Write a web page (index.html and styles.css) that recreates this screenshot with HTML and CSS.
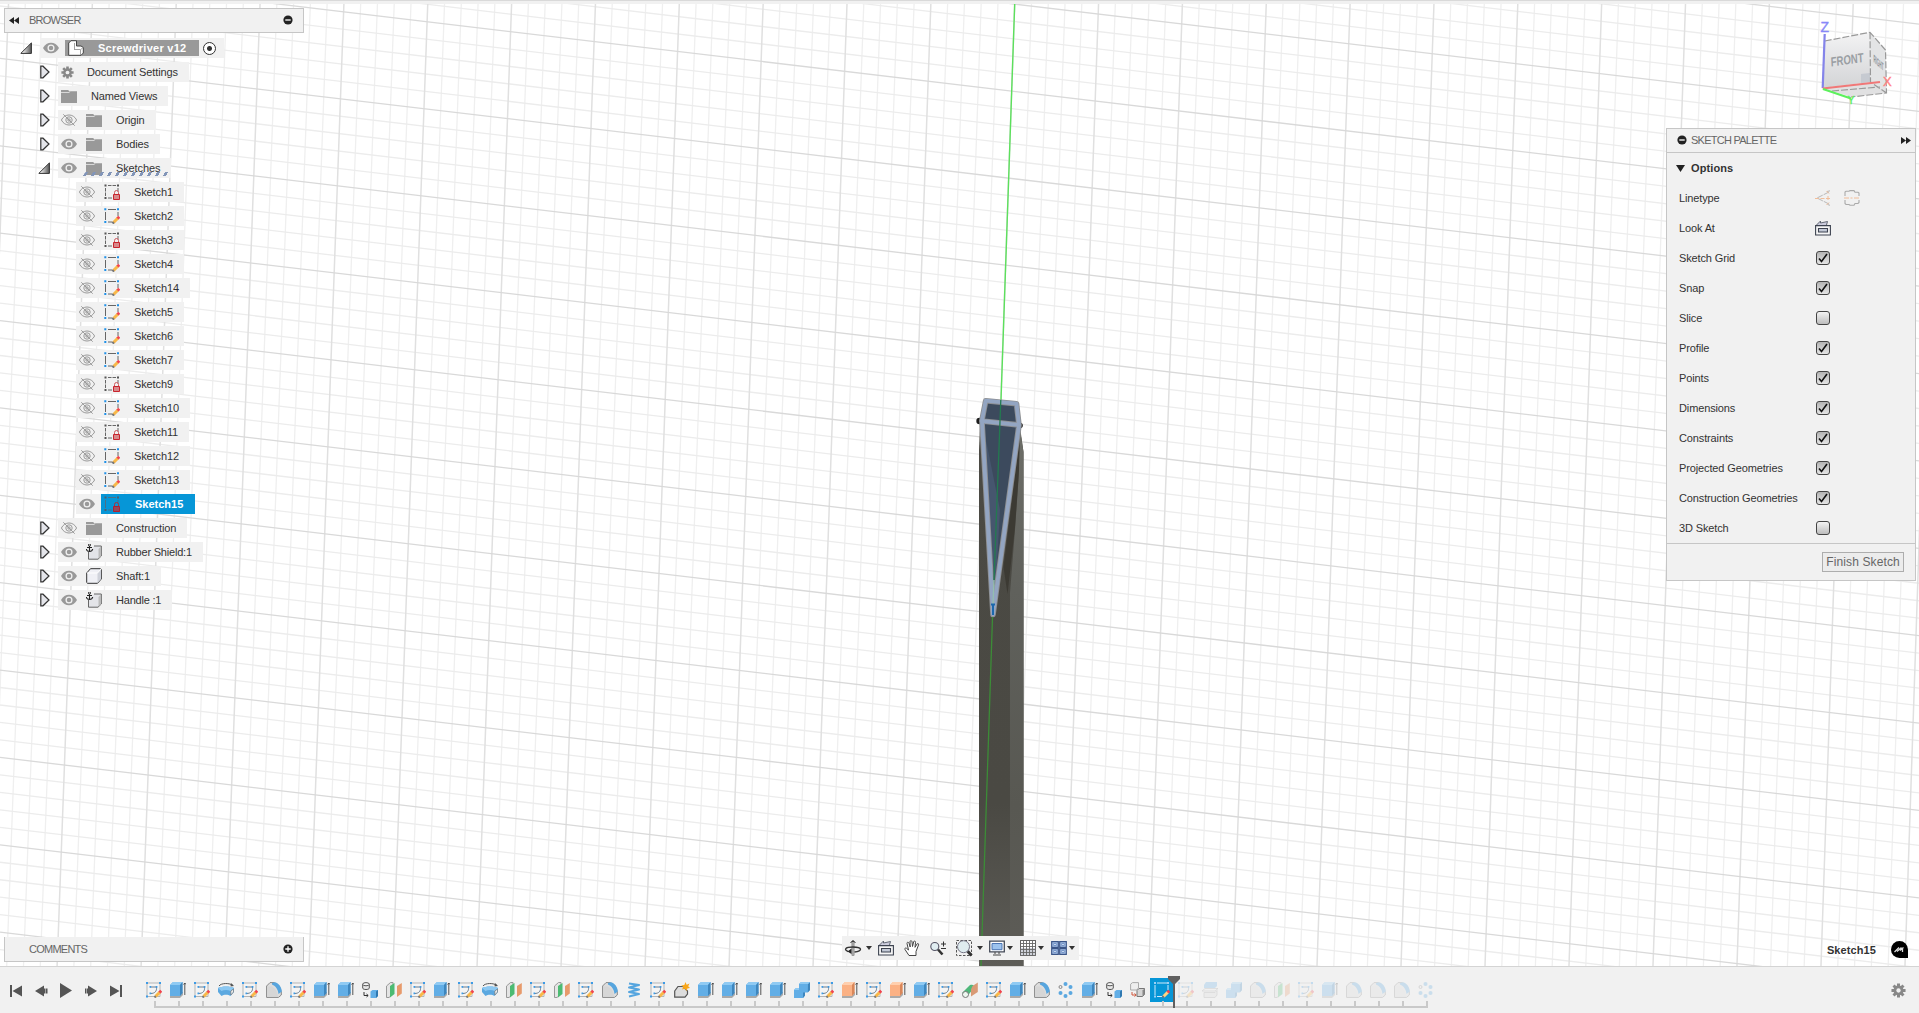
FILE: index.html
```html
<!DOCTYPE html>
<html lang="en">
<head>
<meta charset="utf-8">
<title>Screwdriver v12</title>
<link rel="stylesheet" href="styles.css">
</head>
<body>
<svg class="defs" width="0" height="0">
  <defs>
    <linearGradient id="g-metal" x1="0" y1="0" x2="0" y2="1"><stop offset="0" stop-color="#4b4a44"/><stop offset=".7" stop-color="#4a4943"/><stop offset="1" stop-color="#5d5c57"/></linearGradient>
    <linearGradient id="g-side" x1="0" y1="0" x2="0" y2="1"><stop offset="0" stop-color="#6d6e68"/><stop offset=".3" stop-color="#60615c"/><stop offset=".7" stop-color="#585852"/><stop offset="1" stop-color="#5d5c57"/></linearGradient>
    <linearGradient id="g-cube" x1="0" y1="0" x2="0" y2="1"><stop offset="0" stop-color="#f3f3f4"/><stop offset="1" stop-color="#d3d4d6"/></linearGradient>
    <linearGradient id="g-open" x1="0" y1="0" x2="1" y2="0"><stop offset=".2" stop-color="#eee"/><stop offset="1" stop-color="#555"/></linearGradient>
  </defs>
  <symbol id="open" viewBox="0 0 12 12"><path d="M.8 11.4L11.4.9V11.4Z" fill="url(#g-open)" stroke="#333"/></symbol>
  <symbol id="closed" viewBox="0 0 12 14"><path d="M1.8 1.2H4L10 7 4 12.8H1.8Z" fill="#e4e5ea" stroke="#333" stroke-width="1.2"/></symbol>
  <symbol id="eye" viewBox="0 0 16 16"><path d="M0 8C3.500 1 12.500 1 16 8C12.500 15 3.500 15 0 8Z" fill="#999"/><circle cx="8" cy="8" r="2.900" fill="#999" stroke="#f1f1f1" stroke-width="1.300"/></symbol>
  <symbol id="hid" viewBox="0 0 16 16"><g fill="none" stroke="#9a9a9a"><path d="M.4 8C3.700 1.300 12.300 1.300 15.600 8C12.300 14.700 3.700 14.700 .4 8Z"/><circle cx="8" cy="8" r="3.200"/><circle cx="8" cy="8" r="1.200"/><path d="M2.300 2.300L13.700 13.700"/></g></symbol>
  <symbol id="folder" viewBox="0 0 16 16"><path d="M0 2H7L8.500 3.200H16V15H0Z" fill="#999"/><path d="M0 4.500H8L9.300 3.300" fill="none" stroke="#d8d8d8"/></symbol>
  <symbol id="gear" viewBox="0 0 16 16"><g stroke="currentColor" stroke-width="3.200"><path d="M8 .5V15.500M.5 8H15.500M2.700 2.700L13.300 13.300M13.300 2.700L2.700 13.300"/></g><circle cx="8" cy="8" r="5.300" fill="currentColor"/><circle cx="8" cy="8" r="2.300" fill="#f1f1f1"/></symbol>
  <symbol id="locked" viewBox="0 0 16 16"><path d="M4 1.500H7.500M8.500 1.500H12M1.500 4V7.500M1.500 8.500V12M14 4V7.500M4 14H8" fill="none" stroke="#666"/><path d="M.5 .5h2v2h-2zM13 .5h2v2h-2zM.5 13h2v2h-2z" fill="#555"/><path d="M10.500 10V8.500a2 2 0 0 1 4 0V10" fill="none" stroke="#d05a5f"/><path d="M9.500 10.500h6v5h-6z" fill="#d8888a" stroke="#c8232c"/></symbol>
  <symbol id="locked-on" viewBox="0 0 16 16"><path d="M4 1.500H12M1.500 4V12M14 4V7.500M4 14H8" fill="none" stroke="#4d6f85"/><path d="M.5 .5h2v2h-2zM13 .5h2v2h-2zM.5 13h2v2h-2z" fill="#4d5f70"/><path d="M10.500 10V8.500a2 2 0 0 1 4 0V10" fill="none" stroke="#a8323f"/><path d="M9.500 10.500h6v5h-6z" fill="#94485c" stroke="#b02233"/></symbol>
  <symbol id="edit" viewBox="0 0 16 16"><path d="M4 1.500H12M1.500 4V12M14 4V8M4 14H8" fill="none" stroke="#666"/><path d="M.3 .3h2v2h-2zM13 .3h2v2h-2zM.3 13h2v2h-2z" fill="#1e90e8"/><path d="M9.500 14.500L14 10" stroke="#f9b84a" stroke-width="3"/><path d="M13.500 10.500L15.300 8.700" stroke="#f04550" stroke-width="3"/><path d="M8.500 15.500L9.800 14.200" stroke="#777" stroke-width="2.500"/></symbol>
  <symbol id="assembly" viewBox="0 0 16 16"><path d="M.7 3L3 .7H8.500V6H13L15.300 7.500V13L13 15.300H.7Z" fill="#fff" stroke="#444"/><path d="M6.500 3V9.500M6 9.500H12.500L14.800 8M12.500 10V15" fill="none" stroke="#999" stroke-width=".9"/></symbol>
  <symbol id="anchor" viewBox="0 0 16 16"><path d="M2.500 8V15.200H12L15.300 12V2H8" fill="#e3e4e8" stroke="#666"/><path d="M12.500 5L15 2.500V12L12.500 14.500Z" fill="#bbb"/><path d="M3.500 2V7M1 3.500H6M.3 5C1 8.300 6 8.300 6.700 5" fill="none" stroke="#222" stroke-width="1.100"/><circle cx="3.500" cy="1" r="1.100" fill="#f1f1f1" stroke="#222" stroke-width=".9"/></symbol>
  <symbol id="body" viewBox="0 0 16 16"><path d="M.7 5L4.500 .7H14.500L15.300 1.500V11L11.500 15.300H1.500L.7 14.500Z" fill="#eff0f5" stroke="#333"/><path d="M11.500 5V15L15 11V1.500Z" fill="#cfd2da"/><path d="M1 5H11.500L15 1" fill="none" stroke="#fff"/></symbol>
  <symbol id="lookat" viewBox="0 0 16 16"><path d="M.6 5.600H15.400V15H.6Z" fill="#f7f7f7" stroke="#3d4350" stroke-width="1.100"/><path d="M3.500 8.500h9v3.500h-9z" fill="#c3c9d6" stroke="#3d4350" stroke-width="1.100"/><path d="M1.500 5L5.500 1V3L12.500 1.500 11.500 5" fill="#ccd" stroke="#555b68" stroke-width=".9"/></symbol>
  <symbol id="minus" viewBox="0 0 10 10"><circle cx="5" cy="5" r="4.600" fill="#222"/><path d="M2.300 5H7.700" stroke="#fff" stroke-width="1.300"/></symbol>
  <symbol id="plus" viewBox="0 0 10 10"><circle cx="5" cy="5" r="4.600" fill="#222"/><path d="M2.300 5H7.700M5 2.300V7.700" stroke="#fff" stroke-width="1.300"/></symbol>
  <symbol id="tri" viewBox="0 0 6 4"><path d="M0 0H6L3 4Z" fill="#333"/></symbol>
  <symbol id="check" viewBox="0 0 14 14"><path d="M3 7.500L5.500 10.500 11 3" fill="none" stroke="#111" stroke-width="1.600"/></symbol>

  <symbol id="t-sketch" viewBox="0 0 16 16"><path d="M1 1H14V14.500H1Z" fill="#f4f4f4" stroke="#b5b5b5"/><path d="M4 5H10.500C11 9 9 11.500 4.500 11.500" fill="none" stroke="#6a7d8e"/><path d="M0 0h2v2H0zM13 0h2v2h-2zM0 13.500h2v2H0zM3.500 4h1.700v1.700H3.500zM9.700 4h1.700v1.700H9.700zM3.500 10.500h1.700v1.700H3.500z" fill="#3d9be6"/><path d="M9.500 14.500L14 10" stroke="#f9b84a" stroke-width="3"/><path d="M13.500 10.500L15.300 8.700" stroke="#f04550" stroke-width="3"/><path d="M8.500 15.500L9.800 14.200" stroke="#777" stroke-width="2"/></symbol>
  <symbol id="t-current" viewBox="0 0 16 16"><path d="M3 1H13M1 3V13M14 3V8M3 14.500H8" fill="none" stroke="#cfe9fa"/><path d="M0 0h2v2H0zM13 0h2v2h-2zM0 13.500h2v2H0z" fill="#9bd0f5"/><path d="M9.500 14.500L14 10" stroke="#ffd383" stroke-width="3"/><path d="M13.500 10.500L15.300 8.700" stroke="#f04550" stroke-width="3"/><path d="M8.500 15.500L9.800 14.200" stroke="#777" stroke-width="2"/></symbol>
  <symbol id="t-extrude" viewBox="0 0 16 16"><path d="M0 12.500V16H10L13 13V10Z" fill="#aaa"/><path d="M0 3L3 0H12.500V11L10 14H0Z" fill="#62aee6"/><path d="M0 3L3 0H12.500L10 3Z" fill="#8fcaf3"/><path d="M10 3L12.500 0V11L10 14Z" fill="#3e86bd"/><path d="M14.800 13V1M13.500 2.500L14.800 1 16 2.500" fill="none" stroke="#444" stroke-width=".9"/></symbol>
  <symbol id="t-orange" viewBox="0 0 16 16"><path d="M0 12.500V16H10L13 13V10Z" fill="#aaa"/><path d="M0 3L3 0H12.500V11L10 14H0Z" fill="#fbb184"/><path d="M0 3L3 0H12.500L10 3Z" fill="#ffcfae"/><path d="M10 3L12.500 0V11L10 14Z" fill="#d9875a"/><path d="M14.800 13V1M13.500 2.500L14.800 1 16 2.500" fill="none" stroke="#444" stroke-width=".9"/></symbol>
  <symbol id="t-revolve" viewBox="0 0 16 16"><path d="M1 4C3 .8 12 .8 15 3.500" fill="none" stroke="#555"/><path d="M13 1L16 4 12.500 4.500" fill="#555"/><path d="M0 6C4 4 12 4 16 6V10L12.500 14C10 12.300 6 12.300 3.500 14L0 10Z" fill="#5ba8e0"/><path d="M0 6C4 4 12 4 16 6L12.500 9C10 7.700 6 7.700 3.500 9Z" fill="#8cc8f2"/><path d="M12.800 9L15.500 7V10L12.800 13Z" fill="#eee" stroke="#777" stroke-width=".7"/></symbol>
  <symbol id="t-fillet" viewBox="0 0 16 16"><path d="M.6 4L4 .6H8C12 2 14.500 5 15.300 10V13L12.500 15.400H.6Z" fill="#ddd" stroke="#888"/><path d="M6 1L9 .3C13 1.500 15.500 5 15.800 9.500L12.500 12C12 7.500 10 4 6 2.500Z" fill="#57a5de"/><path d="M1 4.500H5.500C9 6 11.500 9 12 14.800H1Z" fill="#d6d6d6"/></symbol>
  <symbol id="t-copy" viewBox="0 0 16 16"><path d="M.7 2.200V6C.7 8 7.300 8 7.300 6V2.200" fill="#e7e7e7" stroke="#555"/><ellipse cx="4" cy="2.200" rx="3.300" ry="1.600" fill="#f6f6f6" stroke="#555"/><path d="M2 10V13.500H6M4.500 12L6.200 13.500 4.500 15" fill="none" stroke="#333"/><path d="M8.500 9.500L10.500 8H16V14L14 16H8.500Z" fill="#62aee6"/><path d="M14 9.500L16 8V14L14 16Z" fill="#2f78b0"/></symbol>
  <symbol id="t-derive" viewBox="0 0 16 16"><path d="M.6 2.200L2.500 .6H8.500V6L6.500 8H.6Z" fill="#eee" stroke="#aaa"/><path d="M2 10V13H6M4.500 11.500L6.200 13 4.500 14.500" fill="none" stroke="#d0573c"/><path d="M7 8.500L9 6.500H14.500V12.500L12.500 14.500H7Z" fill="#d5d5d5" stroke="#777"/><path d="M12.500 8.500L14.500 6.500V12.500L12.500 14.500Z" fill="#888"/></symbol>
  <symbol id="t-plane" viewBox="0 0 16 16"><path d="M.5 4L4.500 .5H7V12L3 15.500H.5Z" fill="#e4e4e4" stroke="#999"/><path d="M4 4L8.500 1V12L4 15.500Z" fill="#4cbb72"/><path d="M11 4L15.800 1V11.500L11 15Z" fill="#e79a6b"/></symbol>
  <symbol id="t-coil" viewBox="0 0 16 16"><path d="M3 1.500L13 3 3 5.500 13 7.500 3 10 13 12 3 14.500" fill="none" stroke="#55a5df" stroke-width="2" stroke-linejoin="round"/></symbol>
  <symbol id="t-form" viewBox="0 0 16 16"><path d="M.7 9L4 4.500H9L13.500 9V12L11 15.200H.7Z" fill="#ddd" stroke="#555" stroke-width="1.200"/><path d="M11.500 0L12.600 2.800 15.500 1.500 14.200 4.300 16 6 13.300 6.500 12.500 9 10.800 6.700 8 7.500 9.300 5 7.300 3.500 10.300 3Z" fill="#f9a61a"/></symbol>
  <symbol id="t-combine" viewBox="0 0 16 16"><path d="M5 2L7 0H16V8L13.500 10.500H11V13.500L9 16H0V8L2 6H5Z" fill="#62aee6"/><path d="M14 2L16 0V8L13.800 10.500ZM9 10.500H11V13.500L9 16Z" fill="#3e86bd"/><path d="M5 2L7 0H16L14 2ZM0 8L2 6H5V8Z" fill="#8fcaf3"/></symbol>
  <symbol id="t-sweep" viewBox="0 0 16 16"><path d="M0 11L8 3C11 2 13 3.500 12 6L5 14.500Z" fill="#4fb87a"/><circle cx="3.500" cy="12.500" r="3" fill="#edf7f0" stroke="#777"/><path d="M10.500 4L15.800 .5V10L9 14.500V7.500Z" fill="#d99a75"/></symbol>
  <symbol id="t-pattern" viewBox="0 0 16 16"><g fill="#5ba8e0"><circle cx="7.500" cy="2" r="2"/><circle cx="12.500" cy="5" r="2"/><circle cx="12.500" cy="11" r="2"/><circle cx="7.500" cy="14" r="2"/><circle cx="2.500" cy="11" r="2"/></g><circle cx="2.500" cy="5" r="1.500" fill="#eee" stroke="#888"/></symbol>
  <symbol id="t-split" viewBox="0 0 16 16"><path d="M2 3L4 0H15V4L13 6H2Z" fill="#62aee6"/><path d="M0 9L3 6.500H16L13 9Z" fill="#eee" stroke="#888" stroke-width=".7"/><path d="M2 10.500H13L15 8.500V13L13 15.500H2Z" fill="#ddd" stroke="#888" stroke-width=".7"/></symbol>
</svg>

<div class="app">
  <div class="topstrip"></div>
  <main class="viewport">
    <svg class="scene" viewBox="0 4 1919 962">
      <g id="grid"></g>
      <path class="axis" d="M1014.700 4L1001 400"/>
      <path d="M980 424L979 450V966H1023.500V452L1020 427Z" fill="url(#g-metal)"/>
      <path d="M1020 430L1023.500 452V966H1010V593L1015 530 1018.500 480Z" fill="url(#g-side)"/>
      <path d="M1019.500 440L1007 540 1003.500 567 1007.500 594 1015 527 1019 470Z" fill="#3c3a33"/>
      <circle cx="979.500" cy="421" r="3.200" fill="#1d1d1d"/><circle cx="1020" cy="425.500" r="2.800" fill="#1d1d1d"/>
      <path d="M985.700 400.500L1016.500 403.500 1019.300 425 993 614 982 421.500Z" fill="#3c4a5d"/>
      <path d="M984 430L1000 510 995 600Z" fill="#46566e"/>
      <path class="rim" d="M985.700 400.700L1016.500 403.700 1019 425 981.800 421ZM982 422L993 614.500 1019 425"/>
      <path class="outline" d="M985.700 400.700L1016.500 403.700 1019 425 981.800 421ZM982 422L993 614.500 1019 425"/>
      <path d="M1000.800 400L994 580" stroke="#237a50" stroke-width="1.300"/>
      <path d="M994 580L993 605" stroke="#93bfb0" stroke-width="1.300"/>
      <path d="M992.500 617L981 966" stroke="#3c8c37" stroke-width="1.300"/>
      <path d="M991 604.500H995M993 604V615" stroke="#1c68ad" stroke-width="2"/>

      <g class="viewcube">
        <path d="M1824.700 41L1870 32.300 1870.500 82 1822.700 88Z" fill="url(#g-cube)"/>
        <path d="M1870 32.300L1885.500 50 1886.500 93 1870.500 82Z" fill="#e3e4e5"/>
        <path d="M1822.700 88L1870.500 82 1886.500 93 1851 97Z" fill="#e1e1e2"/>
        <path d="M1861 74L1870 73V82L1861 83Z" fill="#c6cad1"/>
        <path class="edge" d="M1824.700 41L1870 32.300 1885.500 50 1886.500 93 1851 97M1870 32.300L1870.500 82 1886.500 93M1832 91L1880 87"/>
        <text transform="translate(1831 66.500) rotate(-8) skewX(-5)" textLength="33" lengthAdjust="spacingAndGlyphs" font-size="13" font-weight="bold" fill="#9a9ea3">FRONT</text>
        <text transform="translate(1873.500 62) skewY(42)" textLength="10" lengthAdjust="spacingAndGlyphs" font-size="11" font-weight="bold" fill="#8d9196">RIGHT</text>
        <path d="M1824.700 34L1822.700 88" stroke="#8484ea" stroke-width="2.200"/>
        <path d="M1822.700 88.500L1880 82" stroke="#f07878" stroke-width="2.200"/>
        <path d="M1823 89L1851 98.500" stroke="#5cf05c" stroke-width="2.200"/>
        <text x="1820.500" y="32" font-size="14" stroke-width=".4" stroke="#8888f8" fill="#8888f8">Z</text>
        <text x="1883" y="86" font-size="13" stroke-width=".4" stroke="#ff8383" fill="#ff8383">X</text>
        <text x="1847.700" y="104" font-size="10" stroke-width=".4" stroke="#5cf05c" fill="#5cf05c">Y</text>
      </g>
    </svg>

    <aside class="left">
      <header class="panelbar browser">
        <svg class="rew" viewBox="0 0 10 7"><path d="M5 0V7L0 3.500ZM10 0V7L5 3.500Z" fill="#222"/></svg>
        <span class="caption">BROWSER</span>
        <svg class="dot"><use href="#minus"/></svg>
      </header>
      <ul class="tree">
        <li class="l0"><svg class="arw open"><use href="#open"/></svg><div class="row"><svg><use href="#eye"/></svg><b class="root"><svg><use href="#assembly"/></svg>Screwdriver v12</b><i class="radio"></i></div></li>
        <li class="l1"><svg class="arw"><use href="#closed"/></svg><div class="row doc"><svg class="gear"><use href="#gear"/></svg><span>Document Settings</span></div></li>
        <li class="l1"><svg class="arw"><use href="#closed"/></svg><div class="row views"><svg><use href="#folder"/></svg><span>Named Views</span></div></li>
        <li class="l1"><svg class="arw"><use href="#closed"/></svg><div class="row"><svg><use href="#hid"/></svg><svg><use href="#folder"/></svg><span>Origin</span></div></li>
        <li class="l1"><svg class="arw"><use href="#closed"/></svg><div class="row"><svg><use href="#eye"/></svg><svg><use href="#folder"/></svg><span>Bodies</span></div></li>
        <li class="l1"><svg class="arw open"><use href="#open"/></svg><div class="row hatch"><svg><use href="#eye"/></svg><svg><use href="#folder"/></svg><span>Sketches</span></div></li>
        <li class="l2"><div class="row"><svg><use href="#hid"/></svg><svg><use href="#locked"/></svg><span>Sketch1</span></div></li>
        <li class="l2"><div class="row"><svg><use href="#hid"/></svg><svg><use href="#edit"/></svg><span>Sketch2</span></div></li>
        <li class="l2"><div class="row"><svg><use href="#hid"/></svg><svg><use href="#locked"/></svg><span>Sketch3</span></div></li>
        <li class="l2"><div class="row"><svg><use href="#hid"/></svg><svg><use href="#edit"/></svg><span>Sketch4</span></div></li>
        <li class="l2"><div class="row"><svg><use href="#hid"/></svg><svg><use href="#edit"/></svg><span>Sketch14</span></div></li>
        <li class="l2"><div class="row"><svg><use href="#hid"/></svg><svg><use href="#edit"/></svg><span>Sketch5</span></div></li>
        <li class="l2"><div class="row"><svg><use href="#hid"/></svg><svg><use href="#edit"/></svg><span>Sketch6</span></div></li>
        <li class="l2"><div class="row"><svg><use href="#hid"/></svg><svg><use href="#edit"/></svg><span>Sketch7</span></div></li>
        <li class="l2"><div class="row"><svg><use href="#hid"/></svg><svg><use href="#locked"/></svg><span>Sketch9</span></div></li>
        <li class="l2"><div class="row"><svg><use href="#hid"/></svg><svg><use href="#edit"/></svg><span>Sketch10</span></div></li>
        <li class="l2"><div class="row"><svg><use href="#hid"/></svg><svg><use href="#locked"/></svg><span>Sketch11</span></div></li>
        <li class="l2"><div class="row"><svg><use href="#hid"/></svg><svg><use href="#edit"/></svg><span>Sketch12</span></div></li>
        <li class="l2"><div class="row"><svg><use href="#hid"/></svg><svg><use href="#edit"/></svg><span>Sketch13</span></div></li>
        <li class="l2"><div class="row active"><svg><use href="#eye"/></svg><b><svg><use href="#locked-on"/></svg>Sketch15</b></div></li>
        <li class="l1"><svg class="arw"><use href="#closed"/></svg><div class="row"><svg><use href="#hid"/></svg><svg><use href="#folder"/></svg><span>Construction</span></div></li>
        <li class="l1"><svg class="arw"><use href="#closed"/></svg><div class="row"><svg><use href="#eye"/></svg><svg><use href="#anchor"/></svg><span class="tight">Rubber Shield:1</span></div></li>
        <li class="l1"><svg class="arw"><use href="#closed"/></svg><div class="row"><svg><use href="#eye"/></svg><svg><use href="#body"/></svg><span>Shaft:1</span></div></li>
        <li class="l1"><svg class="arw"><use href="#closed"/></svg><div class="row"><svg><use href="#eye"/></svg><svg><use href="#anchor"/></svg><span class="tight">Handle :1</span></div></li>
      </ul>
      <footer class="panelbar comments">
        <span class="caption">COMMENTS</span>
        <svg class="dot"><use href="#plus"/></svg>
      </footer>
    </aside>

    <nav class="navbar">
      <svg viewBox="0 0 16 16"><path d="M8 1V15.500" stroke="#444" stroke-width="2.600"/><path d="M8 2V15" stroke="#fff"/><path d="M5.500 3L8 .3 10.500 3" fill="none" stroke="#333"/><path d="M9.500 12C18 11 17.500 7 8 7C-.5 7-1 10 3 11.500" fill="none" stroke="#333" stroke-width="1.400"/><path d="M6.500 8.500V14L2.500 11.500Z" fill="#222"/></svg>
      <svg class="tri t1"><use href="#tri"/></svg>
      <svg class="n2"><use href="#lookat"/></svg>
      <svg class="n3" viewBox="0 0 16 16"><path d="M5 15.500L1 9.500C.3 8 2 7.500 3 8.700L4.500 10 3 3.500C2.800 2 4.500 1.800 5 3.200L6.200 7 6 1.700C6 .3 7.800.3 8 1.700L8.500 6.500 9.700 1.700C10.200.5 11.700 1 11.500 2.300L11 7.300 13 4C13.800 3 15 3.700 14.500 5L12 11.500V15.500Z" fill="#fff" stroke="#444"/></svg>
      <svg class="n4" viewBox="0 0 16 16"><path d="M8 9.500L12.500 14.500" stroke="#333" stroke-width="2.600"/><circle cx="4.800" cy="6.500" r="4" fill="#e1eef2" stroke="#556" stroke-width="1.100"/><path d="M11 4H16M13.500 1.500V6.500M11 8.500H16" stroke="#333"/></svg>
      <svg class="n5" viewBox="0 0 16 16"><path d="M.5 .5H15.500V15.500H.5Z" fill="none" stroke="#555" stroke-dasharray="2.500 1.500"/><path d="M11.500 11L15.500 15.500" stroke="#333" stroke-width="3"/><circle cx="7.500" cy="6.700" r="6" fill="#dfecef" stroke="#778"/></svg>
      <svg class="tri t5"><use href="#tri"/></svg>
      <svg class="n6" viewBox="0 0 16 16"><path d="M.7 1.200H15.300V11.800H.7Z" fill="#fff" stroke="#444b58" stroke-width="1.300"/><path d="M3 3.500H13V9.700H3Z" fill="#9dc3ee" stroke="#4c76b4"/><path d="M6 12V14M10 12V14M4 15H12" stroke="#444"/></svg>
      <svg class="tri t6"><use href="#tri"/></svg>
      <svg class="n7" viewBox="0 0 16 16"><path d="M.5 .5H15.500V15.500H.5Z" fill="#fff" stroke="#444"/><path d="M.5 8H15.500V15.500H.5Z" fill="#cfd2da"/><path d="M.5 3.500H15.500M.5 6.500H15.500M.5 9.500H15.500M.5 12.500H15.500M3.500 .5V15.500M6.500 .5V15.500M9.500 .5V15.500M12.500 .5V15.500M.5 .5H15.500V15.500H.5Z" fill="none" stroke="#666" stroke-width=".9"/></svg>
      <svg class="tri t6"><use href="#tri"/></svg>
      <svg class="n8" viewBox="0 0 16 16"><path d="M.7 1.700H7.300V7.300H.7ZM8.700 1.700H15.300V7.300H8.700ZM.7 8.700H7.300V14.300H.7ZM8.700 8.700H15.300V14.300H8.700Z" fill="#a9c4ea" stroke="#3c5688" stroke-width="1.200"/><path d="M2.700 3.500h2.600v2H2.700zM10.700 3.500h2.600v2h-2.600zM2.700 10.500h2.600v2H2.700zM10.700 10.500h2.600v2h-2.600z" fill="#d6e4f8" stroke="#5b7fb8" stroke-width=".7"/></svg>
      <svg class="tri t6"><use href="#tri"/></svg>
    </nav>

    <aside class="right">
      <section class="palette">
        <header><svg class="dot"><use href="#minus"/></svg><span class="caption">SKETCH PALETTE</span><svg class="fwd" viewBox="0 0 10 7"><path d="M0 0V7L5 3.500ZM5 0V7L10 3.500Z" fill="#222"/></svg></header>
        <h3><svg viewBox="0 0 9 7"><path d="M0 0H9L4.500 7Z" fill="#222"/></svg>Options</h3>
        <dl>
          <dt>Linetype</dt><dd class="types">
            <svg viewBox="0 0 16 16"><path d="M14 2L2 8 14 14M12 1.500L15 .8M12.500 14.500L15 15.300" fill="none" stroke="#b9b9b9" stroke-dasharray="6 1"/><path d="M0 8.500H16M13 6V11M11.500 1L14 3.500M11.500 15L14 12.500" stroke="#f0bd9a" stroke-dasharray="4 1.500"/></svg>
            <svg viewBox="0 0 16 16"><path d="M1 6V2L2 1.300H5L6 .6H10L11 2.200H14L15 3V6M1 10V13.500L2 14.500H5L6 15.300H10L11 13.500H14L15 12.500V10" fill="none" stroke="#aaa" stroke-width="1.100"/><path d="M0 8H16" stroke="#f0bd9a" stroke-dasharray="5 1.500 2 1.500"/></svg></dd>
          <dt>Look At</dt><dd><svg class="look"><use href="#lookat"/></svg></dd>
          <dt>Sketch Grid</dt><dd><i class="box"><svg><use href="#check"/></svg></i></dd>
          <dt>Snap</dt><dd><i class="box"><svg><use href="#check"/></svg></i></dd>
          <dt>Slice</dt><dd><i class="box off"></i></dd>
          <dt>Profile</dt><dd><i class="box"><svg><use href="#check"/></svg></i></dd>
          <dt>Points</dt><dd><i class="box"><svg><use href="#check"/></svg></i></dd>
          <dt>Dimensions</dt><dd><i class="box"><svg><use href="#check"/></svg></i></dd>
          <dt>Constraints</dt><dd><i class="box"><svg><use href="#check"/></svg></i></dd>
          <dt>Projected Geometries</dt><dd><i class="box"><svg><use href="#check"/></svg></i></dd>
          <dt>Construction Geometries</dt><dd><i class="box"><svg><use href="#check"/></svg></i></dd>
          <dt>3D Sketch</dt><dd><i class="box off"></i></dd>
        </dl>
        <footer><button>Finish Sketch</button></footer>
      </section>
      <div class="status"><b>Sketch15</b><svg viewBox="0 0 17 17"><path d="M8.500 0A8.500 8.500 0 0 1 17 8.500V17H8.500A8.500 8.500 0 0 1 8.500 0Z" fill="#000"/><path d="M3.500 11L8 6.500M6 10.500L10.500 6.500M9 9.500L12.500 6.500M11.500 7V11" stroke="#ddd" stroke-width="1.300"/></svg></div>
    </aside>
  </main>

  <footer class="timeline">
    <div class="play">
      <svg viewBox="0 0 12 12"><path d="M0 0H2V12H0ZM12 .5V11.500L2.500 6Z"/></svg>
      <svg viewBox="0 0 12 12"><path d="M9 .5V11.500L0 6ZM9 3.500H10.500V8.500H9ZM11 3.500H12.500V8.500H11Z"/></svg>
      <svg class="big" viewBox="0 0 12 15"><path d="M0 0L12 7.500 0 15Z"/></svg>
      <svg viewBox="0 0 12 12"><path d="M3 .5V11.500L12 6ZM0 3.500H1.500V8.500H0ZM2 3.500H3V8.500H2Z"/></svg>
      <svg viewBox="0 0 12 12"><path d="M0 .5V11.500L9.500 6ZM10 0H12V12H10Z"/></svg>
    </div>
    <ol id="features" class="features"></ol>
    <svg class="settings"><use href="#gear"/></svg>
  </footer>
</div>
<script src="script.js"></script>
</body>
</html>
```
FILE: styles.css
```css
* { box-sizing: border-box; margin: 0; padding: 0; }
body { font: 11px/14px "Liberation Sans", Arial, sans-serif; color: #333; background: #fff; overflow: hidden; }
svg { display: block; flex: none; width: 16px; height: 16px; overflow: visible; }
ul, ol { list-style: none; }
.defs { position: absolute; width: 0; height: 0; }

.app { display: grid; grid-template-rows: 4px 962px 47px; width: 1919px; height: 1013px; }
.topstrip { background: #f1f1f1; border-top: 1px solid #d9d9d9; }

/* drawing area */
.viewport { position: relative; display: grid; grid-template-columns: 304px 1fr 253px; overflow: hidden; }
.scene { position: absolute; inset: 0; width: 1919px; height: 962px; }
.minor-h { stroke: #ececec; stroke-width: 1.3; fill: none; }
.minor-v { stroke: #efefef; stroke-width: 1.3; fill: none; }
.major-h { stroke: #d9d9d9; stroke-width: 1.3; fill: none; }
.major-v { stroke: #e0e0e0; stroke-width: 1.5; fill: none; }
.axis { stroke: #5ce05c; stroke-width: 1.4; }
.rim { fill: none; stroke: #8e9093; stroke-width: 5.6; stroke-linejoin: round; }
.outline { fill: none; stroke: #93a5c2; stroke-width: 3.8; stroke-linejoin: round; }
.edge { fill: none; stroke: #999; stroke-width: 1.2; stroke-dasharray: 7 2; }

.left, .right { position: relative; display: flex; flex-direction: column; }
.left { padding: 4px 0 4px 4px; }
.panelbar { display: flex; align-items: center; width: 300px; height: 25px; background: #f1f1f1; border: 1px solid #c6c6c6; padding: 0 10px 0 4px; }
.caption { color: #666; letter-spacing: -.75px; }
.panelbar .caption { flex: 1; margin-left: 10px; }
.panelbar.browser { padding-bottom: 1px; }
.rew, .fwd { width: 10px; height: 7px; }
.dot { width: 10px; height: 10px; }
.comments { margin-top: auto; border-top: 0; padding-left: 14px; }

.tree { display: flex; flex-direction: column; gap: 4px; margin-top: 5px; letter-spacing: -.12px; }
.tree li { display: flex; align-items: center; height: 20px; }
.l0 { padding-left: 17px; }
.l1 { padding-left: 35px; }
.l2 { padding-left: 72px; }
.arw { width: 12px; height: 14px; }
.arw.open { height: 12px; margin: 0 1px 0 -1px; }
.row { position: relative; display: flex; align-items: center; height: 20px; padding: 0 11px 0 3px; background: #f1f1f1; }
.l1 .row { margin-left: 7px; }
.l0 .row { margin-left: 7px; }
.row > svg + svg { margin-left: 9px; }
.row > svg + span { margin-left: 14px; }
.row .gear { width: 13px; height: 13px; color: #888; }
.row.doc > svg + span { margin-left: 13px; }
.row .tight { letter-spacing: -.2px; }
.row b { display: flex; align-items: center; color: #fff; }
.row b svg { margin-right: 15px; }
.root { width: 134px; height: 16px; margin-left: 6px; padding-left: 3px; background: #999; letter-spacing: .27px; }
.row .root svg { margin-right: 14px; }
.radio { width: 13px; height: 13px; margin-left: 4px; border: 1px solid #333; border-radius: 50%; background: radial-gradient(circle, #333 0 2px, #fff 3px); }
.l0 .row { padding-right: 8px; }
.row.active { padding-right: 0; }
.active b { width: 94px; height: 20px; margin-left: 6px; padding-left: 3px; background: #0696d7; letter-spacing: 0; }
.hatch::after { content: ""; position: absolute; left: 26px; top: 14px; width: 87px; height: 4px; background: repeating-linear-gradient(90deg, #8295b8 0 3px, transparent 3px 8px); transform: skewX(-40deg); }

.navbar { position: relative; align-self: end; display: flex; align-items: center; width: 237px; height: 24px; margin: 0 0 6px 538px; padding-left: 3px; background: #f1f1f1; }
.tri { width: 6px; height: 4px; }
.t1 { margin-left: 5px; }
.n2 { margin-left: 6px; }
.n3, .n4, .n5 { margin-left: 10px; }
.t5 { margin-left: 5px; }
.n6 { margin-left: 6px; }
.t6 { margin-left: 2px; }
.n7, .n8 { margin-left: 7px; }

/* sketch palette */
.palette { width: 250px; margin-top: 124px; border: 1px solid #c6c6c6; background: #f1f1f1; letter-spacing: -.13px; }
.palette header { display: flex; align-items: center; height: 24px; padding: 0 4px 1px 10px; border-bottom: 1px solid #c6c6c6; }
.palette header .caption { flex: 1; margin-left: 4px; }
.palette h3 { display: flex; align-items: center; height: 30px; padding-left: 9px; font-size: 11px; letter-spacing: .1px; }
.palette h3 svg { width: 9px; height: 7px; margin-right: 6px; }
.palette dl { display: grid; grid-template-columns: 136px 1fr; grid-auto-rows: 30px; align-items: center; padding-left: 12px; }
.palette dd { display: flex; align-items: center; height: 15px; }
.types { gap: 13px; }
.box { width: 14px; height: 14px; margin-left: 1px; border: 1px solid #444; border-radius: 3px; background: linear-gradient(#b4b4b4, #e4e4e4); }
.box.off { background: linear-gradient(#f4f4f4, #bdbdbd); }
.box svg { width: 14px; height: 14px; margin: -1px; }
.palette footer { display: flex; justify-content: flex-end; align-items: center; height: 37px; padding-right: 11px; border-top: 1px solid #c6c6c6; }
.palette button { width: 82px; height: 20px; font: 12px "Liberation Sans", Arial, sans-serif; letter-spacing: .12px; color: #666; background: #ececec; border: 1px solid #adadad; white-space: nowrap; }
.status { display: flex; align-items: center; justify-content: flex-end; gap: 15px; margin: auto 11px 8px 0; }
.status svg { width: 17px; height: 17px; }
.status b { letter-spacing: .1px; text-shadow: 0 0 2px #fff, 0 0 2px #fff; }

/* feature timeline */
.timeline { display: flex; background: #f1f1f1; border-top: 1px solid #d4d4d4; }
.play { display: flex; align-items: center; gap: 13px; width: 142px; height: 47px; padding-left: 10px; }
.play svg { width: 12px; height: 12px; fill: #555; }
.play .big { height: 15px; }
.features { display: flex; height: 41px; }
.features li { position: relative; width: 24px; height: 41px; padding: 15px 0 0 4px; background: linear-gradient(#c9c9c9, #c9c9c9) 0 100% / 100% 2px no-repeat; }
.features li::after { content: ""; position: absolute; left: 12px; bottom: 2px; width: 2px; height: 5px; background: #c9c9c9; }
.features li:first-child { background-position: 100% 100%; background-size: 12px 2px; }
.features li:last-child { background-size: 14px 2px; }
.features .later svg { opacity: .25; }
.features .current::before { content: ""; position: absolute; left: 0; top: 11px; width: 24px; height: 24px; background: #0696d7; }
.features .current svg { position: relative; }
.features .current .marker { position: absolute; left: 18px; top: 9px; width: 12px; height: 32px; z-index: 1; }
.settings { width: 15px; height: 15px; margin: 16px 13px 0 auto; color: #888; }
```
FILE: script.js
```js
const NS = 'http://www.w3.org/2000/svg';

// Sketch grid: five minor cells per major cell, slightly converging verticals.
const grid = document.getElementById('grid');
const lines = { 'minor-v': '', 'minor-h': '', 'major-v': '', 'major-h': '' };
for (let i = -65; i <= 65; i++) {
  const k = i / 5;
  const top = 1014.7 + 83.85 * k;
  const bottom = top + 962 * (-0.035 + 0.00015 * k);
  lines[i % 5 ? 'minor-v' : 'major-v'] += `M${top} 4L${bottom} 966`;
}
for (let i = -15; i <= 60; i++) {
  const y = 58.4 + 17.475 * i;
  lines[i % 5 ? 'minor-h' : 'major-h'] += `M0 ${y}L1919 ${y + 1919 * 0.1187}`;
}
for (const name in lines) {
  const path = document.createElementNS(NS, 'path');
  path.setAttribute('class', name);
  path.setAttribute('d', lines[name]);
  grid.append(path);
}

// Timeline features, in build order.
const history = ('sketch extrude sketch revolve sketch fillet sketch extrude extrude copy plane sketch extrude sketch revolve ' +
  'plane sketch plane sketch fillet coil sketch form extrude extrude extrude extrude combine sketch orange sketch orange ' +
  'extrude sketch sweep sketch extrude fillet pattern extrude copy derive current sketch split combine fillet plane sketch ' +
  'extrude fillet fillet fillet pattern').split(' ');
const now = history.indexOf('current');
document.getElementById('features').innerHTML = history.map((kind, i) => {
  const state = i === now ? 'current' : i > now ? 'later' : '';
  const marker = i === now
    ? '<svg class="marker" viewBox="0 0 12 32"><path d="M0 0H12V3L7 8V32H5V8L0 3Z" fill="#606060"/></svg>' : '';
  return `<li class="${state}"><svg><use href="#t-${kind}"/></svg>${marker}</li>`;
}).join('');
```
